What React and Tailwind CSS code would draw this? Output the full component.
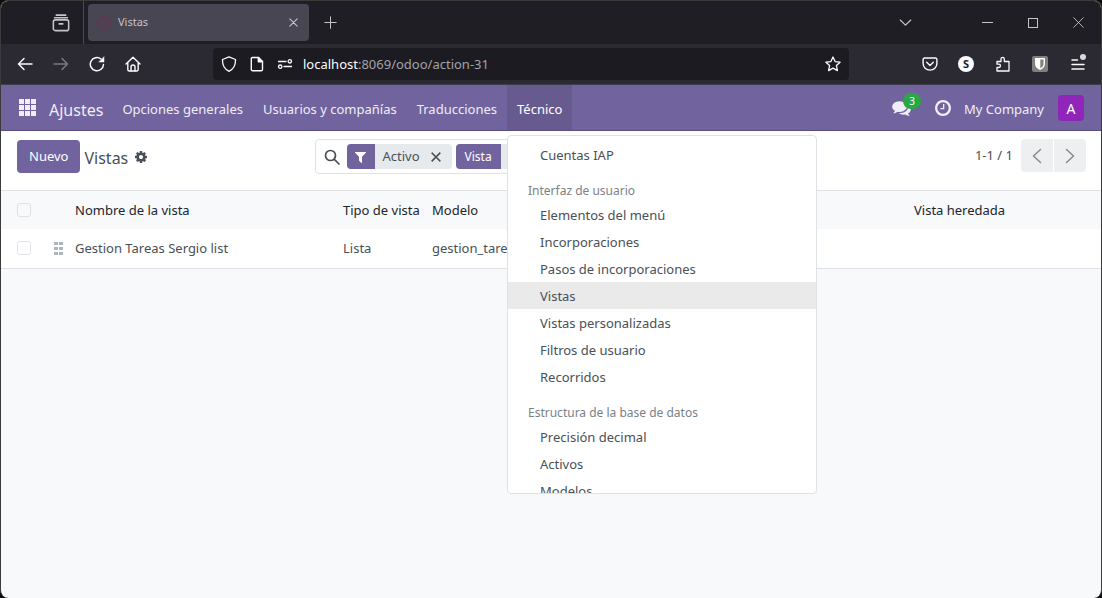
import React from "react";

const stroke = {
  fill: "none",
  stroke: "currentColor",
  strokeLinecap: "round",
  strokeLinejoin: "round",
};

function Icon({ size = 16, width = 1.3, children, className = "" }) {
  return (
    <svg width={size} height={size} viewBox="0 0 16 16" strokeWidth={width} className={className} aria-hidden="true" {...stroke}>
      {children}
    </svg>
  );
}

function Solid({ w = 1536, size = 16, d, className = "" }) {
  return (
    <svg width={Math.round((size * w) / 1536)} height={size} viewBox={`0 128 ${w} 1536`} fill="currentColor" className={className} aria-hidden="true">
      <path d={d} />
    </svg>
  );
}

const CLOCK =
  "M896 544v448q0 14-9 23t-23 9h-320q-14 0-23-9t-9-23v-64q0-14 9-23t23-9h224v-352q0-14 9-23t23-9h64q14 0 23 9t9 23zM1312 896q0-148-73-273t-198-198-273-73-273 73-198 198-73 273 73 273 198 198 273 73 273-73 198-198 73-273zM1536 896q0 209-103 385.5t-279.5 279.5-385.5 103-385.5-103-279.5-279.5-103-385.5 103-385.5 279.5-279.5 385.5-103 385.5 103 279.5 279.5 103 385.5z";
const COMMENTS =
  "M1408 768q0 139-94 257t-256.5 186.5-353.5 68.5q-86 0-176-16-124 88-278 128-36 9-86 16h-3q-11 0-20.5-8t-11.5-21q-1-3-1-6.5t.5-6.5 2-6l2.5-5t3.5-5.5 4-5 4.5-5 4-4.5q5-6 23-25t26-29.5 22.5-29 25-38.5 20.5-44q-124-72-195-177t-71-224q0-139 94-257t256.5-186.5 353.5-68.5 353.5 68.5 256.5 186.5 94 257zM1792 1024q0 120-71 224.5t-195 176.5q10 24 20.5 44t25 38.5 22.5 29 26 29.5 23 25q1 1 4 4.5t4.5 5 4 5 3.5 5.5l2.5 5t2 6 .5 6.5-1 6.5q-3 14-13 22t-22 7q-50-7-86-16-154-40-278-128-90 16-176 16-271 0-472-132 58 4 88 4 161 0 309-45t264-129q125-92 192-212t67-254q0-77-23-152 129 71 204 178t75 230z";
const COG =
  "M1024 896q0-106-75-181t-181-75-181 75-75 181 75 181 181 75 181-75 75-181zM1536 787v222q0 12-8 23t-20 13l-185 28q-19 54-39 91 35 50 107 138 10 12 10 25t-9 23q-27 37-99 108t-94 71q-12 0-26-9l-138-108q-44 23-91 38-16 136-29 186-7 28-36 28h-222q-14 0-24.5-8.5t-11.5-21.5l-28-184q-49-16-90-37l-141 107q-10 9-25 9-14 0-25-11-126-114-165-168-7-10-7-23 0-12 8-23 15-21 51-66.5t54-70.5q-27-50-41-99l-183-27q-13-2-21-12.5t-8-23.5v-222q0-12 8-23t19-13l186-28q14-46 39-92-40-57-107-138-10-12-10-24 0-10 9-23 26-36 98.5-107.5t94.5-71.5q13 0 26 10l138 107q44-23 91-38 16-136 29-186 7-28 36-28h222q14 0 24.5 8.5t11.5 21.5l28 184q49 16 90 37l142-107q9-9 24-9 13 0 25 10 129 119 165 170 7 8 7 22 0 12-8 23-15 21-51 66.5t-54 70.5q26 50 41 98l183 28q13 2 21 12.5t8 23.5z";
const FILTER =
  "M1403 295q17 41-14 70l-493 493v742q0 42-39 59-13 5-25 5-27 0-45-19l-256-256q-19-19-19-45v-486l-493-493q-31-29-14-70 17-39 59-39h1280q42 0 59 39z";

function TabBar() {
  return (
    <div className="flex h-[43px] items-stretch bg-[#1f1e25] text-[#c4c4c9]">
      <div className="flex w-[83px] items-center justify-end border-r border-[#4b4a52] pr-3">
        <button type="button" aria-label="Pestañas recientes" className="p-px">
          <Icon size={18} width={1.4}>
            <path d="M3.8 1h8.4M2.300 3.400h11.400" />
            <rect x="1.200" y="5.200" width="13.600" height="9.600" rx="1.800" />
            <path d="M6.400 8.800h3.200" />
          </Icon>
        </button>
      </div>
      <div className="my-[3px] ml-1 flex w-[221px] items-center rounded-[4px] bg-[#484652] pr-2 pl-[9px]">
        <span className="h-[14px] w-[14px] rounded-full border-[3px] border-[#5c3a50]" />
        <span className="ml-[7px] flex-1 text-[11px]">Vistas</span>
        <button type="button" aria-label="Cerrar pestaña" className="flex h-4 w-4 items-center justify-center">
          <Icon size={9} width={2}>
            <path d="M1.500 1.500l13 13M14.500 1.500l-13 13" />
          </Icon>
        </button>
      </div>
      <button type="button" aria-label="Nueva pestaña" className="ml-[15px] flex items-center">
        <Icon size={13} width={1.300}>
          <path d="M8 1v14M1 8h14" />
        </Icon>
      </button>
      <div className="ml-auto flex items-center">
        <button type="button" aria-label="Listar pestañas" className="mr-[70px]">
          <Icon size={13} width={1.500}>
            <path d="M1.500 5L8 11.300 14.500 5" />
          </Icon>
        </button>
        <button type="button" aria-label="Minimizar" className="mr-[35px]">
          <span className="block h-px w-[11px] bg-current" />
        </button>
        <button type="button" aria-label="Maximizar" className="mr-[35px] h-[10px] w-[10px] border border-current" />
        <button type="button" aria-label="Cerrar" className="mr-[17px]">
          <Icon size={11} width={1.300}>
            <path d="M1 1l14 14M15 1L1 15" />
          </Icon>
        </button>
      </div>
    </div>
  );
}

function Toolbar() {
  return (
    <div className="flex h-[41px] items-center border-b border-[#3f3c49] bg-[#2b2a33] text-[#fbfbfe]">
      <div className="flex w-[212px] items-center gap-5 pl-4">
        <button type="button" aria-label="Atrás">
          <Icon width={1.500}><path d="M15 8H1.500M7 2.500L1.500 8 7 13.500" /></Icon>
        </button>
        <button type="button" aria-label="Adelante" className="text-[#7b7a82]" disabled>
          <Icon width={1.500}><path d="M1 8h13.500M9 2.500L14.500 8 9 13.500" /></Icon>
        </button>
        <button type="button" aria-label="Recargar">
          <Icon width={1.500}>
            <path d="M14.500 8.500A6.600 6.600 0 1 1 12 3" />
            <path d="M15 1v5h-5z" fill="currentColor" strokeWidth="0.500" />
          </Icon>
        </button>
        <button type="button" aria-label="Inicio">
          <Icon width={1.400}>
            <path d="M1 8l7-6.700L15 8M2.800 6.600V13.500a1.500 1.500 0 0 0 1.500 1.500h7.400a1.500 1.500 0 0 0 1.500-1.500V6.600" />
            <path d="M6 15v-4a2 2 0 0 1 4 0v4" />
          </Icon>
        </button>
      </div>
      <div className="flex h-8 w-[636px] shrink items-center rounded-[4px] bg-[#1c1b22] px-2">
        <Icon size={16} width={1.300}>
          <path d="M8 .8l6.500 2.700c.2 5-1.700 9.600-6.500 11.800C3.200 13.100 1.300 8.500 1.500 3.500z" />
        </Icon>
        <Icon size={16} width={1.400} className="ml-[12px]">
          <path d="M3.500 1.500h6l4 4v8a1.200 1.200 0 0 1-1.200 1.200H3.500A1.200 1.200 0 0 1 2.300 13.500V2.700a1.200 1.200 0 0 1 1.200-1.200z" />
          <path d="M9.300 1.500v4.200h4.200z" fill="currentColor" />
        </Icon>
        <Icon size={16} width={1.300} className="ml-[12px]">
          <path d="M1.500 5.500h7.500M7 10.500h7.500" />
          <circle cx="12.800" cy="5.300" r="1.700" />
          <circle cx="3.200" cy="10.700" r="1.700" />
        </Icon>
        <div role="textbox" tabIndex={0} aria-label="Dirección" className="ml-[10px] flex-1 pt-[2px] text-[13px] text-[#a3a2aa]">
          <span className="text-[#fbfbfe]">localhost</span>:8069/odoo/action-31
        </div>
        <button type="button" aria-label="Añadir a marcadores">
          <Icon width={1.300}>
            <path d="M8 1l2.100 4.600 5 .6-3.700 3.400 1 5L8 12.100l-4.400 2.500 1-5L.900 6.200l5-.6z" />
          </Icon>
        </button>
      </div>
      <div className="ml-auto flex items-center gap-5 pr-[15px]">
        <button type="button" aria-label="Pocket">
          <Icon size={16} width={1.400}>
            <path d="M2.500 2h11a1.400 1.400 0 0 1 1.400 1.400v4a6.900 6.700 0 0 1-13.800 0v-4A1.400 1.400 0 0 1 2.500 2z" />
            <path d="M4.700 6.300L8 9.400l3.300-3.100" />
          </Icon>
        </button>
        <button type="button" className="flex h-4 w-4 items-center justify-center rounded-full bg-[#fbfbfe] text-[11px] leading-4 font-bold text-[#1c1b22]">S</button>
        <button type="button" aria-label="Extensiones" className="ml-px">
          <Icon width={1.300}>
            <path d="M2 5.500h4V3a1.600 1.600 0 0 1 3.300 0v2.500H14V15H2v-3.500h1.800a1.600 1.600 0 0 0 0-3.300H2z" />
          </Icon>
        </button>
        <button type="button" aria-label="Bitwarden" className="ml-px flex h-4 w-4 items-center justify-center rounded-[2px] bg-[#808080]">
          <svg width="12" height="14" viewBox="0 0 12 14" aria-hidden="true">
            <path d="M1 1h10v6c0 3-2.500 5-5 6-2.500-1-5-3-5-6z" fill="#fff" />
            <path d="M6.300 2.500h3.200V7c0 2-1.500 3.500-3.200 4.400z" fill="#808080" />
          </svg>
        </button>
        <button type="button" aria-label="Menú" className="relative ml-[2px]">
          <Icon width={1.500}>
            <path d="M2 4h5.500M2 8.500h12M2 13h12" />
          </Icon>
          <span className="absolute -top-[2px] right-0 h-[6px] w-[6px] rounded-full bg-[#dadada]" />
        </button>
      </div>
    </div>
  );
}

const MENU = [
  { items: ["Cuentas IAP"] },
  {
    title: "Interfaz de usuario",
    items: ["Elementos del menú", "Incorporaciones", "Pasos de incorporaciones", "Vistas", "Vistas personalizadas", "Filtros de usuario", "Recorridos"],
  },
  { title: "Estructura de la base de datos", items: ["Precisión decimal", "Activos", "Modelos"] },
];

function TechnicalMenu() {
  return (
    <div className="absolute top-[50px] left-0 z-10 h-[359px] w-[310px] overflow-hidden rounded-[4px] border border-[#dee2e6] bg-white pt-[5px] text-[#495057]">
      {MENU.map((group, i) => (
        <div key={i}>
          {group.title && <div className="flex h-[33px] items-end px-5 text-[12px] leading-5 text-[#79828a]">{group.title}</div>}
          {group.items.map((item) => (
            <a
              key={item}
              href="#"
              className={`flex h-[27px] items-center pt-[2px] pr-5 pl-8 text-[13px] ${item === "Vistas" ? "bg-[#eaeaea]" : ""}`}
            >
              {item}
            </a>
          ))}
        </div>
      ))}
    </div>
  );
}

function NavBar() {
  const item = "flex items-center px-[10px] pt-[3px]";
  return (
    <nav className="flex h-[46px] items-stretch bg-[#71639e] text-[13px] text-[#efedf5] shadow-[inset_0_-1px_0_#5a4f7f]">
      <button type="button" aria-label="Aplicaciones" className="flex items-center pr-[12px] pl-[18px]">
        <svg width="18" height="18" viewBox="0 0 18 18" fill="currentColor" aria-hidden="true">
          {[0, 6, 12].map((y) => [0, 6, 12].map((x) => <rect key={`${x}${y}`} x={x} y={y} width="5" height="5" />))}
        </svg>
      </button>
      <a href="#" className="flex items-center pt-[3px] pr-[9px] text-[16px]">Ajustes</a>
      <a href="#" className={item}>Opciones generales</a>
      <a href="#" className={item}>Usuarios y compañías</a>
      <a href="#" className={item}>Traducciones</a>
      <div className="relative flex">
        <button type="button" className={`${item} bg-[#675a8f] text-white shadow-[inset_0_-1px_0_#5a4f7f]`}>Técnico</button>
        <TechnicalMenu />
      </div>
      <div className="ml-auto flex items-center pr-[17px]">
        <button type="button" aria-label="Conversaciones" className="relative mr-[24px]">
          <Solid w={1792} size={16} d={COMMENTS} />
          <span className="absolute -top-[7px] left-[11px] h-4 w-[18px] rounded-full bg-[#28a745] text-center text-[10px] leading-4 text-white">3</span>
        </button>
        <button type="button" aria-label="Actividades" className="mr-[13px]">
          <Solid size={16} d={CLOCK} />
        </button>
        <button type="button" className="pt-[3px]">My Company</button>
        <button type="button" className="ml-[14px] h-[26px] w-[26px] rounded-[4px] bg-[#8f26b9] text-[14px] text-white">A</button>
      </div>
    </nav>
  );
}

function ControlPanel() {
  return (
    <div className="grid h-[60px] grid-cols-[1fr_474px_1fr] items-start border-b border-[#dee2e6] bg-white pt-2 pr-[15px] pl-4 text-[#495057]">
      <div className="mt-px flex items-center">
        <button type="button" className="h-[33px] rounded-[4px] bg-[#71639e] px-3 text-[13px] text-white">Nuevo</button>
        <h1 className="ml-1 pt-[2px] text-[16px]">Vistas</h1>
        <button type="button" aria-label="Acciones" className="ml-[7px]">
          <Solid size={12} d={COG} />
        </button>
      </div>
      <div className="flex h-[35px] items-center rounded-[4px] border border-[#dee2e6] text-[13px]">
        <Icon size={16} width={1.700} className="ml-[8px]">
          <circle cx="6.500" cy="6.500" r="5" />
          <path d="M10.300 10.300L15 15" />
        </Icon>
        <div className="ml-[7px] flex h-[25px] items-center overflow-hidden rounded-[4px] bg-[#e7eaed]">
          <span className="flex h-full w-7 items-center justify-center bg-[#71639e] text-white">
            <Solid w={1408} size={12} d={FILTER} />
          </span>
          <span className="pt-px pl-2">Activo</span>
          <button type="button" aria-label="Quitar filtro" className="px-[11px]">
            <Icon size={10} width={2.600}><path d="M2 2l12 12M14 2L2 14" strokeLinecap="square" /></Icon>
          </button>
        </div>
        <div className="ml-1 flex h-[25px] items-center overflow-hidden rounded-[4px] bg-[#e7eaed]">
          <span className="flex h-full items-center bg-[#71639e] px-[9px] text-[12px] text-white">Vista</span>
          <span className="w-20" />
        </div>
        <input type="text" aria-label="Buscar" className="min-w-0 flex-1 outline-none" />
      </div>
      <div className="flex items-center justify-end text-[13px]">
        <span>1-1 / 1</span>
        <div className="ml-2 flex gap-px">
          <button type="button" aria-label="Anterior" className="flex h-[33px] w-8 items-center justify-center rounded-l-[4px] bg-[#eeeff1] text-[#87898c]">
            <Icon size={16} width={1.500}><path d="M11.500 1.500L4.500 8l7 6.500" /></Icon>
          </button>
          <button type="button" aria-label="Siguiente" className="flex h-[33px] w-8 items-center justify-center rounded-r-[4px] bg-[#eeeff1] text-[#87898c]">
            <Icon size={16} width={1.500}><path d="M4.500 1.500l7 6.500-7 6.500" /></Icon>
          </button>
        </div>
      </div>
    </div>
  );
}

function Check({ label }) {
  return <input type="checkbox" aria-label={label} className="block h-[14px] w-[14px] appearance-none rounded-[3px] border border-[#dee2e6]" />;
}

function ViewsTable() {
  return (
    <table className="w-full table-fixed border-b border-[#dee2e6] text-left text-[13px] text-[#495057]">
      <colgroup>
        <col className="w-12" />
        <col className="w-[21px]" />
        <col className="w-[268px]" />
        <col className="w-[89px]" />
        <col />
        <col className="w-[192px]" />
      </colgroup>
      <thead className="bg-[#f8f9fb] text-[#212529]">
        <tr className="h-[38px]">
          <th className="pl-4"><Check label="Seleccionar todo" /></th>
          <th />
          <th className="px-[5px] pt-px font-normal">Nombre de la vista</th>
          <th className="px-[5px] pt-px font-normal whitespace-nowrap">Tipo de vista</th>
          <th className="px-[5px] pt-px font-normal">Modelo</th>
          <th className="px-[5px] pt-px font-normal">Vista heredada</th>
        </tr>
      </thead>
      <tbody className="bg-white">
        <tr className="h-[39px]">
          <td className="pl-4"><Check label="Seleccionar fila" /></td>
          <td className="pl-[5px]">
            <svg width="9" height="13" viewBox="0 0 9 13" fill="#adb5bd" aria-hidden="true">
              {[0, 5, 10].map((y) => [0, 5].map((x) => <rect key={`${x}-${y}`} x={x} y={y} width="4" height="3" />))}
            </svg>
          </td>
          <td className="px-[5px]">Gestion Tareas Sergio list</td>
          <td className="px-[5px]">Lista</td>
          <td className="px-[5px]">gestion_tareas</td>
          <td />
        </tr>
      </tbody>
    </table>
  );
}

export default function App() {
  return (
    <div className="min-h-screen bg-[#0c0c0c] font-['Noto_Sans','Open_Sans',sans-serif]">
      <div className="flex min-h-screen flex-col overflow-hidden rounded-[8px] border border-b-0 border-[#3b3b3b] bg-[#f8f9fb]">
        <TabBar />
        <Toolbar />
        <NavBar />
        <ControlPanel />
        <main>
          <ViewsTable />
        </main>
      </div>
    </div>
  );
}
